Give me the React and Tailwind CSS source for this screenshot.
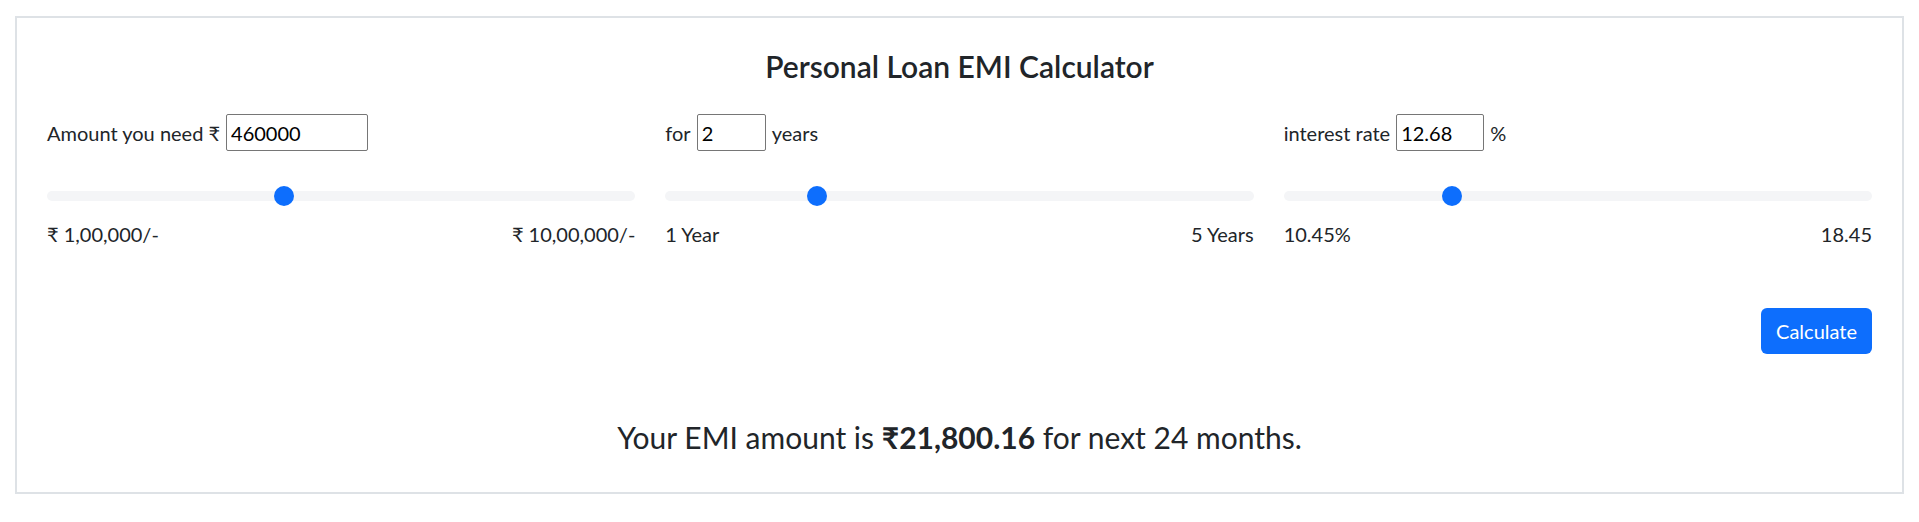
import { useState } from 'react';

const RANGES = [
  { key: 'amount', min: 100000, max: 1000000, minLabel: '₹ 1,00,000/-', maxLabel: '₹ 10,00,000/-' },
  { key: 'years', min: 1, max: 5, minLabel: '1 Year', maxLabel: '5 Years' },
  { key: 'rate', min: 10.45, max: 18.45, minLabel: '10.45%', maxLabel: '18.45' },
];

function Slider({ value, min, max }) {
  const pct = (value - min) / (max - min);
  return (
    <div className="relative h-[20px] flex items-center">
      <div className="w-full h-[10px] rounded-full bg-[#f4f5f7]" />
      {/* thumb */}
      <div
        className="absolute top-0 w-[20px] h-[20px] rounded-full bg-[#0d6efd]"
        style={{ left: `calc((100% - 20px) * ${pct})` }}
      />
    </div>
  );
}

function emi(p, years, rate) {
  const r = rate / 12 / 100;
  const n = years * 12;
  return (p * r * Math.pow(1 + r, n)) / (Math.pow(1 + r, n) - 1);
}

export default function App() {
  const [amount, setAmount] = useState('460000');
  const [years, setYears] = useState('2');
  const [rate, setRate] = useState('12.68');

  const values = { amount: +amount, years: +years, rate: +rate };
  const result = emi(+amount, +years, +rate);

  const inputCls = 'h-[37px] border border-[#767676] rounded-[2px] px-[4px] text-[20px] text-black outline-none';

  return (
    <div className="min-h-[522px] bg-white text-[#212529] font-['Lato',sans-serif] pt-[16px] px-[15px]">
      <div className="border-2 border-[#dee2e6] px-[30px] pt-[30px] pb-[37px]">
        <h4 className="text-center text-[30px] leading-[36px] font-semibold">Personal Loan EMI Calculator</h4>

        <div className="grid grid-cols-3 gap-x-[30px] mt-[30px]">
          <div className="flex flex-col">
            <div className="flex items-center gap-[6px] h-[37px] text-[20px] leading-[30px]">
              <span>Amount you need ₹</span>
              <input value={amount} onChange={e => setAmount(e.target.value)} className={`${inputCls} w-[142px]`} />
            </div>
          </div>
          <div className="flex flex-col">
            <div className="flex items-center gap-[6px] h-[37px] text-[20px] leading-[30px]">
              <span>for</span>
              <input value={years} onChange={e => setYears(e.target.value)} className={`${inputCls} w-[69px]`} />
              <span>years</span>
            </div>
          </div>
          <div className="flex flex-col">
            <div className="flex items-center gap-[6px] h-[37px] text-[20px] leading-[30px]">
              <span>interest rate</span>
              <input value={rate} onChange={e => setRate(e.target.value)} className={`${inputCls} w-[88px]`} />
              <span>%</span>
            </div>
          </div>

          {RANGES.map(r => (
            <div key={r.key} className="mt-[35px]">
              <Slider value={values[r.key]} min={r.min} max={r.max} />
              <div className="flex justify-between mt-[13px] text-[20px] leading-[30px]">
                <span>{r.minLabel}</span>
                <span>{r.maxLabel}</span>
              </div>
            </div>
          ))}
        </div>

        <div className="flex justify-end mt-[59px]">
          <button className="h-[46px] px-[15px] rounded-[6px] bg-[#0d6efd] text-white text-[20px]">Calculate</button>
        </div>

        <p className="mt-[65px] text-center text-[30px] leading-[36px]">
          Your EMI amount is{' '}
          <b className="font-bold">
            ₹{result.toLocaleString('en-IN', { minimumFractionDigits: 2, maximumFractionDigits: 2 })}
          </b>{' '}
          for next {+years * 12} months.
        </p>
      </div>
    </div>
  );
}
